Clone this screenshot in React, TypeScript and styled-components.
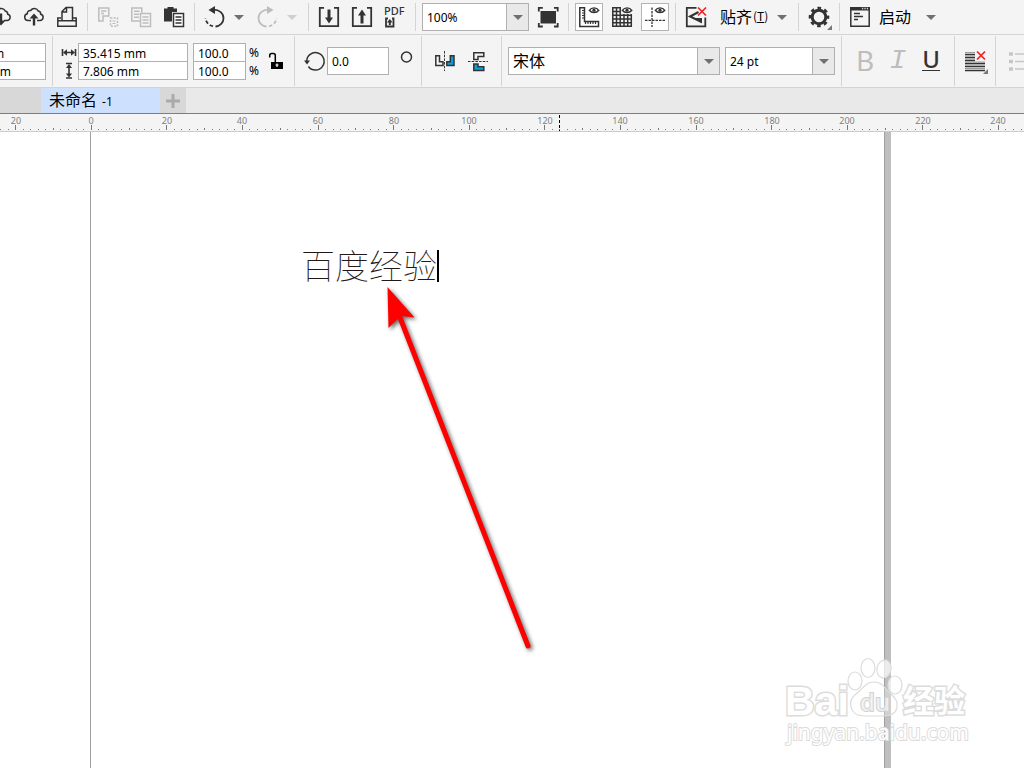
import React, { useEffect, useState } from "react";
import styled, { createGlobalStyle } from "styled-components";

const GlobalStyle = createGlobalStyle`
  *, *::before, *::after { box-sizing: border-box; }
  html, body, #root { height: 100%; }
  body {
    margin: 0;
    overflow: hidden;
    background: #fff;
    color: #000;
    font-family: "Noto Sans", "Noto Sans CJK SC", sans-serif;
    font-size: 12px;
  }
  button, input, select { font: inherit; color: inherit; }
`;

const INK = "#333";
const FAINT = "#bdbdbd";
const BLUE = "#0a9fe0";

/* ---------- layout ---------- */

const Window = styled.div`
  display: flex;
  flex-direction: column;
  height: 100%;
`;

const Toolbar = styled.div<{ $height: number }>`
  display: flex;
  align-items: center;
  flex: none;
  height: ${(p) => p.$height}px;
  overflow: hidden;
  background: #f4f4f4;
  border-bottom: 1px solid #d4d4d4;
`;

const Group = styled.div<{ $tall?: boolean; $roomy?: boolean; $clip?: number; $last?: boolean }>`
  display: flex;
  align-items: center;
  flex: none;
  gap: 5px;
  height: ${(p) => (p.$tall ? 50 : 28)}px;
  padding: 0 ${(p) => (p.$roomy ? 9 : 6)}px;
  border-right: ${(p) => (p.$last ? "none" : "1px solid #d4d4d4")};
  margin-left: ${(p) => -(p.$clip ?? 0)}px;
`;

const Cluster = styled.div`
  display: flex;
  align-items: center;
`;

/* ---------- controls ---------- */

const ToolButton = styled.button<{ $on?: boolean; $width?: number }>`
  display: flex;
  align-items: center;
  justify-content: center;
  flex: none;
  width: ${(p) => p.$width ?? 28}px;
  height: 28px;
  padding: 0;
  border: none;
  background: ${(p) => (p.$on ? "#fff" : "transparent")};
  box-shadow: ${(p) => (p.$on ? "inset 0 0 0 1px #b4b4b4" : "none")};

  svg { display: block; flex: none; }
`;

const LetterButton = styled(ToolButton)<{ $mono?: boolean; $strong?: boolean }>`
  color: ${(p) => (p.$strong ? INK : FAINT)};
  font-family: ${(p) => (p.$mono ? '"Liberation Mono", monospace' : '"Noto Sans", sans-serif')};
  font-style: ${(p) => (p.$mono ? "italic" : "normal")};
  font-size: 28px;
  font-weight: 400;
  line-height: 28px;
  padding-bottom: ${(p) => (p.$mono ? 0 : 2)}px;
`;

const Underlined = styled.span`
  height: 22px;
  line-height: 20px;
  font-size: 24px;
  font-weight: 500;
  border-bottom: 1px solid ${INK};
`;

const MenuButton = styled.button`
  display: flex;
  align-items: center;
  gap: 1px;
  height: 28px;
  padding: 0 0 2px;
  border: none;
  background: transparent;
  font-family: "Noto Sans CJK SC", sans-serif;
  font-size: 16px;
  line-height: 26px;
  white-space: nowrap;
`;

const SnapLabel = styled(MenuButton)`
  width: 57px;
  padding-left: 5px;
`;

const LaunchLabel = styled(MenuButton)`
  width: 42px;
`;

const Mnemonic = styled.span`
  font-size: 12px;
  u { text-underline-offset: 1px; }
`;

const Field = styled.input<{ $width: number; $tall?: boolean }>`
  width: ${(p) => p.$width}px;
  height: ${(p) => (p.$tall ? 28 : 19)}px;
  padding: ${(p) => (p.$tall ? 0 : 2)}px 4px 0;
  border: 1px solid #b0b0b0;
  border-radius: 0;
  background: #fff;
  outline: none;
`;

const Stack = styled.div`
  display: flex;
  flex-direction: column;
  ${Field} + ${Field} { margin-top: -1px; }
`;

const Marks = styled.div<{ $width: number }>`
  display: flex;
  flex-direction: column;
  align-items: center;
  width: ${(p) => p.$width}px;
  padding-top: 2px;
  line-height: 18px;
  svg { display: block; }
`;

const Degree = styled.span`
  display: flex;
  justify-content: center;
  width: 26px;
  padding-left: 8px;
  height: 20px;
`;

const Combo = styled.label<{ $width: number; $large?: boolean }>`
  display: grid;
  flex: none;
  width: ${(p) => p.$width}px;
  height: 28px;
  border: 1px solid #b0b0b0;
  background: #fff;
  font-size: ${(p) => (p.$large ? 16 : 12)}px;

  > * { grid-area: 1 / 1; }
  select {
    width: 100%;
    height: 26px;
    padding: 0 26px 0 4px;
    border: none;
    outline: none;
    appearance: none;
    background: transparent;
  }
`;

const ComboArrow = styled.span`
  display: flex;
  align-items: center;
  justify-content: center;
  justify-self: end;
  width: 22px;
  height: 26px;
  border-left: 1px solid #b0b0b0;
  background: #e9e9e9;
  pointer-events: none;
`;

/* ---------- tabs ---------- */

const TabStrip = styled.div`
  display: flex;
  flex: none;
  height: 26px;
  background: #e9e9e9;
  border-bottom: 1px solid #14a0e4;
`;

const TabHome = styled.button`
  width: 41px;
  border: none;
  background: #d8d8d8;
`;

const Tab = styled.button`
  display: flex;
  align-items: baseline;
  gap: 5px;
  width: 119px;
  padding: 0 8px 2px;
  border: none;
  background: #cde1ff;
  font-family: "Noto Sans CJK SC", sans-serif;
  font-size: 16px;
  line-height: 22px;
  white-space: nowrap;
`;

const TabNumber = styled.span`
  font-family: "Noto Sans", sans-serif;
  font-size: 12px;
`;

const TabAdd = styled.button`
  display: flex;
  align-items: center;
  justify-content: center;
  width: 26px;
  padding: 0;
  border: none;
  background: #d8d8d8;
`;

/* ---------- canvas ---------- */

const RulerBar = styled.div`
  flex: none;
  height: 18px;
  overflow: hidden;
  background: #f4f4f4;
  border-bottom: 1px solid #ccc;
  svg { display: block; }
`;

const Canvas = styled.main`
  position: relative;
  flex: 1;
  overflow: hidden;
  background: #fff;
`;

const Sheet = styled.section`
  width: 795px;
  height: 100%;
  margin-left: 90px;
  border-left: 1px solid #a0a0a0;
  border-right: 1px solid #a0a0a0;
  box-shadow: 6px 0 0 #bfbfbf;
`;

const ArtText = styled.div`
  position: absolute;
  left: 301px;
  top: 118px;
  display: flex;
  height: 32px;
  border-right: 2px solid #000;
  color: #231815;
  font-family: "Noto Sans CJK SC", sans-serif;
  font-size: 34px;
  font-weight: 100;
  line-height: 30px;
  white-space: nowrap;
`;

const Pointer = styled.svg`
  position: absolute;
  left: 380px;
  top: 148px;
  filter: drop-shadow(2px 2px 2px rgba(0, 0, 0, 0.6));
`;

const Watermark = styled.svg`
  position: absolute;
  right: 48px;
  bottom: 16px;
  text { paint-order: stroke; }
`;

/* ---------- icons ---------- */

type IconProps = { children: React.ReactNode; color?: string; w?: number; h?: number };

const Icon = ({ children, color = INK, w = 28, h = 28 }: IconProps) => (
  <svg width={w} height={h} viewBox={`0 0 ${w} ${h}`} fill="none" stroke={color} strokeWidth={1.5} aria-hidden="true">
    {children}
  </svg>
);

const Cloud = ({ up }: { up?: boolean }) => (
  <Icon>
    <path d="M11 17.500H8.200a3.400 3.400 0 0 1-.9-6.700 3 3 0 0 1 3.400-3.300 4.300 4.300 0 0 1 7.600.6 3 3 0 0 1 2.400 3.100 3.200 3.200 0 0 1-.9 6.300H17" />
    {up ? (
      <>
        <path d="M14 22.500V14" strokeWidth={2.4} />
        <path d="M14 10.500l4.500 5h-9z" fill={INK} stroke="none" />
      </>
    ) : (
      <>
        <path d="M14 10.500V19" strokeWidth={2.4} />
        <path d="M14 22.500l4.500-5h-9z" fill={INK} stroke="none" />
      </>
    )}
  </Icon>
);

const Print = () => (
  <Icon>
    <path d="M9 17.500V8.500l4-4h6.500v13M13.500 4.500V9H9" />
    <path d="M8 15H4.800v8.200h18.400V15H20M5 17.800h18" />
  </Icon>
);

const Cut = () => (
  <Icon color={FAINT}>
    <path d="M4.800 5h10v8H9v5H4.800zM7 8h5.500M7 10.500h3" />
    <path d="M16.500 15h7v8.200h-7z" strokeDasharray="2 1.300" />
    <path d="M18.500 18h3M18.500 20.500h3" strokeWidth={1} />
  </Icon>
);

const Copy = () => (
  <Icon color={FAINT}>
    <path d="M13 18H4.800V5h10v4.500M7 8.300h5.500M7 11.300h5M7 14.300h5" />
    <path d="M13.500 10.500h10v13h-10zM15.500 14h6M15.500 17h6M15.500 20h6" />
  </Icon>
);

const Paste = () => (
  <Icon>
    <path d="M4 5.500h3.500V4h6v1.500H17V9h-5v9.500H4z" fill={INK} stroke="none" />
    <path d="M13.500 10.500h10v13h-10z" fill="#fff" />
    <path d="M15.500 14h6M15.500 17h6M15.500 20h6" />
  </Icon>
);

const UndoShape = () => (
  <>
    <path d="M12.500 6.700c6 0 10 3.500 10 8.500 0 4.500-3.500 8-8 8.300" strokeWidth={1.8} />
    <path d="M12 23.200a9 9 0 0 1-7.500-7.700" strokeDasharray="3.500 2" strokeWidth={1.8} />
  </>
);

const Undo = () => (
  <Icon>
    <UndoShape />
    <path d="M7.500 7L14 3v8z" fill={INK} stroke="none" />
  </Icon>
);

const Redo = () => (
  <Icon color={FAINT}>
    <g transform="matrix(-1 0 0 1 27 0)">
      <UndoShape />
      <path d="M7.500 7L14 3v8z" fill={FAINT} stroke="none" />
    </g>
  </Icon>
);

const Import = () => (
  <Icon>
    <path d="M9 4.800H4.800v18.400h18.400V4.800H19" strokeWidth={1.8} />
    <path d="M14 6.500V16" strokeWidth={3} />
    <path d="M14 20.500l4-6h-8z" fill={INK} stroke="none" />
  </Icon>
);

const Export = () => (
  <Icon>
    <path d="M9 4.800H4.800v18.400h18.400V4.800H19" strokeWidth={1.8} />
    <path d="M14 11v9.500" strokeWidth={3} />
    <path d="M14 6.500l4 6h-8z" fill={INK} stroke="none" />
  </Icon>
);

const Pdf = () => (
  <Icon>
    <text x="3" y="12" fontSize="11" fontWeight="500" fontFamily="Noto Sans, sans-serif" fill={INK} stroke="none">PDF</text>
    <path d="M7 15.500H5v8h7.500v-8H11" strokeWidth={1.8} />
    <path d="M8.800 18v4" strokeWidth={2} />
    <path d="M8.800 16l2.900 3.500H5.900z" fill={INK} stroke="none" />
  </Icon>
);

const Preview = () => (
  <Icon>
    <path d="M6.500 8h15.500v12.500H6.500z" fill={INK} stroke="none" />
    <path d="M4.800 8.500V4.800h4M20 4.800h3.700v3.700M23.700 20v3.500H20M8.800 23.500h-4V20" strokeWidth={1.8} />
  </Icon>
);

const Eye = () => (
  <>
    <path d="M14.300 7.300c2.300-3.300 7.200-3.300 9.500 0-2.300 3-7.200 3-9.500 0z" fill="#fff" strokeWidth={1.4} />
    <circle cx="19" cy="7.200" r="1.600" fill={INK} stroke="none" />
  </>
);

const Rulers = () => (
  <Icon>
    <path d="M4.800 4.800h4.700v13.700h14v4.900H4.800z" />
    <path d="M7 7.500h2.500M7 10h2.500M7 12.500h2.500M7 15h2.500M10.500 21v-2.500M13 21v-2.500M15.500 21v-2.500M18 21v-2.500M20.500 21v-2.500" strokeWidth={1.2} />
    <Eye />
  </Icon>
);

const Grid = () => (
  <Icon>
    <path d="M4.800 4v19.500M8.500 4v19.500M12.200 4v19.500M16 11v12.500M19.700 11v12.500M23.300 11v12.500M4 4.800h9M4 8.500h9M4 12.200h20M4 16h20M4 19.700h20M4 23.200h20" />
    <Eye />
  </Icon>
);

const Guides = () => (
  <Icon>
    <path d="M11 4.500v19.500M4 17.300h20" strokeDasharray="2.500 1" strokeWidth={1.3} />
    <Eye />
  </Icon>
);

const SnapOff = () => (
  <Icon>
    <path d="M14.500 4.800H4.800v18.600h18.500v-9" strokeWidth={1.8} />
    <path d="M16.500 9L8 13.500 19.500 19" strokeWidth={2} />
    <path d="M13 15h7v5.500z" fill={INK} stroke="none" />
    <path d="M16 4.500l8 8M24 4.500l-8 8" stroke="#f02020" strokeWidth={1.7} />
  </Icon>
);

const Corner = () => <path d="M27 22v5h-5z" fill="#777" stroke="none" />;

const Gear = () => (
  <Icon>
    <circle cx="14" cy="14" r="6.800" strokeWidth={3} />
    <circle cx="14" cy="14" r="9" strokeWidth={2.6} strokeDasharray="3.600 3.468" strokeDashoffset="1.800" />
    <Corner />
  </Icon>
);

const LaunchIcon = () => (
  <Icon>
    <path d="M4.800 4.800h18.400v18.500H4.800z" />
    <path d="M4 4h20v3.500H4z" fill={INK} stroke="none" />
    <path d="M16 5.500h6" stroke="#ddd" strokeDasharray="1.200 1.200" />
    <path d="M8 10.500h6M8 13.500h9M8 16.500h4" strokeWidth={1.4} />
  </Icon>
);

const Triangle = ({ faint }: { faint?: boolean }) => (
  <svg width="10" height="5" viewBox="0 0 10 5" aria-hidden="true">
    <path d="M0 0h10L5 5z" fill={faint ? "#cfcfcf" : "#707070"} />
  </svg>
);

const WidthMark = () => (
  <Icon w={16} h={18}>
    <path d="M1.500 5v7M14.500 5v7M4 8.500h8" strokeWidth={1.6} />
    <path d="M2 8.500l4-3.200v6.400zM14 8.500l-4-3.200v6.400z" fill={INK} stroke="none" />
  </Icon>
);

const HeightMark = () => (
  <Icon w={16} h={18}>
    <path d="M5 1.500h6M5 16h6M8 5v8" strokeWidth={1.6} />
    <path d="M8 2l3 4H5zM8 15.500l3-4H5z" fill={INK} stroke="none" />
  </Icon>
);

const Lock = () => (
  <Icon w={24} color="#000">
    <path d="M6.700 10.500V8.500q0-2 2-2h1.600q2 0 2 2V15" />
    <path d="M8 15h12v7H8z" fill="#000" stroke="none" />
    <path d="M14 16.500v3.500M12.500 18h3" stroke="#fff" strokeWidth={1.2} />
  </Icon>
);

const Rotate = () => (
  <Icon w={26}>
    <path d="M5.700 14.500a8.700 8.700 0 1 1 1.700 5" />
    <path d="M9 13.500L6 17.500 3 13.500z" fill={INK} stroke="none" />
  </Icon>
);

const MirrorH = () => (
  <Icon>
    <path d="M4.800 8.800h3.700v6H12v3.700H4.800z" />
    <path d="M23 8.800h-3.700v6h-3.500v3.700H23z" fill={BLUE} />
    <path d="M13.500 4v20" strokeDasharray="2.500 1.200" strokeWidth={1} />
  </Icon>
);

const MirrorV = () => (
  <Icon>
    <path d="M9.800 12.500V5.800h10v3.700h-5.800v3z" />
    <path d="M9.800 17v6.500h10v-3.700h-5.800V17z" fill={BLUE} />
    <path d="M4 14.500h20" strokeDasharray="2.500 1.200" strokeWidth={1} />
  </Icon>
);

const AlignNone = () => (
  <Icon>
    <path d="M4 7.500h10M4 10.500h10M4 13.500h10M4 16.500h20M4 19.500h20M4 23.500h20" />
    <path d="M4 5.500h10M4 9h10M4 12h10M4 15h20M4 18h20M4 21.500h20" stroke="#9a9a9a" strokeWidth={1} />
    <path d="M16 4.500l8 8M24 4.500l-8 8" stroke="#f02020" strokeWidth={1.7} />
    <Corner />
  </Icon>
);

const Bullets = () => (
  <Icon color="#c6c6c6">
    <path d="M4 7h4M4 14.500h4M4 22h4" strokeWidth={3.5} />
    <path d="M10 7h16M10 14.500h16M10 22h16" />
  </Icon>
);

/* ---------- ruler ---------- */

const ORIGIN = 91.2;
const PX_PER_MM = 3.78;
const LABEL_ROOM = 12;

const useWindowWidth = () => {
  const [width, setWidth] = useState(window.innerWidth);
  useEffect(() => {
    const update = () => setWidth(window.innerWidth);
    window.addEventListener("resize", update);
    return () => window.removeEventListener("resize", update);
  }, []);
  return width;
};

const Ruler = () => {
  const width = useWindowWidth();
  const marks: { mm: number; x: number }[] = [];
  for (let mm = -24; ORIGIN + mm * PX_PER_MM < width; mm += 2) {
    marks.push({ mm, x: ORIGIN + mm * PX_PER_MM });
  }
  return (
    <RulerBar>
      <svg width="100%" height="17" aria-label="Ruler">
        {marks.map(({ mm, x }) => {
          const size = mm % 20 === 0 ? 5 : mm % 10 === 0 ? 2 : 1;
          return <rect key={mm} x={Math.floor(x)} y={16 - size} width="1" height={size} fill="#777" />;
        })}
        {marks.filter(({ mm, x }) => mm % 20 === 0 && x < width - LABEL_ROOM).map(({ mm, x }) => (
          <text key={mm} x={Math.round(x)} y="10" fontSize="9" textAnchor="middle" fill="#808080">
            {Math.abs(mm)}
          </text>
        ))}
        <path d="M559.500 1v16" stroke="#000" strokeDasharray="3 2" />
      </svg>
    </RulerBar>
  );
};

const BaiduMark = () => (
  <Watermark width="200" height="110" viewBox="0 0 200 110" fill="#fff" stroke="#dcdcdc" strokeWidth={1.2} role="img">
    <g fillOpacity={0.7} transform="translate(0 4)">
      <ellipse cx="79" cy="35" rx="7" ry="9" />
      <ellipse cx="92" cy="22" rx="7" ry="9.500" />
      <ellipse cx="108" cy="23" rx="7" ry="9" transform="rotate(12 108 23)" />
      <ellipse cx="119" cy="39" rx="7" ry="9" />
      <path fillOpacity={0.25} d="M98 36c-9 0-11 7-17 11-5 4-8 8-6 14 2 8 8 9 14 9h18c7 0 13-2 14-9 1-6-2-9-6-13-6-5-8-12-17-12z" />
    </g>
    <text x="9" y="73" fontFamily="Liberation Sans, sans-serif" fontSize="41" fontWeight="700" strokeWidth={3}>Bai</text>
    <text x="84" y="69" fontFamily="Noto Sans, sans-serif" fontSize="24" fontWeight="500" fillOpacity={0.6} stroke="#d2d2d2" strokeWidth={2}>du</text>
    <text x="127" y="70" fontFamily="Noto Sans CJK SC, sans-serif" fontSize="31" fontWeight="700" strokeWidth={3}>经验</text>
    <text x="11" y="98" fontFamily="Noto Sans, sans-serif" fontSize="21" strokeWidth={2}>jingyan.baidu.com</text>
  </Watermark>
);

export default function App() {
  return (
    <Window>
      <GlobalStyle />
      <Toolbar $height={35} role="toolbar" aria-label="Standard">
        <Group $clip={19}>
          <ToolButton aria-label="Download"><Cloud /></ToolButton>
          <ToolButton aria-label="Upload"><Cloud up /></ToolButton>
          <ToolButton aria-label="Print"><Print /></ToolButton>
        </Group>
        <Group>
          <ToolButton aria-label="Cut" disabled><Cut /></ToolButton>
          <ToolButton aria-label="Copy" disabled><Copy /></ToolButton>
          <ToolButton aria-label="Paste"><Paste /></ToolButton>
        </Group>
        <Group>
          <Cluster>
            <ToolButton aria-label="Undo"><Undo /></ToolButton>
            <ToolButton $width={20} aria-label="Undo history"><Triangle /></ToolButton>
          </Cluster>
          <Cluster>
            <ToolButton aria-label="Redo" disabled><Redo /></ToolButton>
            <ToolButton $width={20} aria-label="Redo history" disabled><Triangle faint /></ToolButton>
          </Cluster>
        </Group>
        <Group>
          <ToolButton aria-label="Import"><Import /></ToolButton>
          <ToolButton aria-label="Export"><Export /></ToolButton>
          <ToolButton aria-label="Publish"><Pdf /></ToolButton>
        </Group>
        <Group>
          <Combo $width={107}>
            <select aria-label="Zoom level"><option>100%</option></select>
            <ComboArrow><Triangle /></ComboArrow>
          </Combo>
          <ToolButton aria-label="Full screen preview"><Preview /></ToolButton>
        </Group>
        <Group>
          <ToolButton $on aria-pressed aria-label="Show rulers"><Rulers /></ToolButton>
          <ToolButton aria-label="Show grid"><Grid /></ToolButton>
          <ToolButton $on aria-pressed aria-label="Show guidelines"><Guides /></ToolButton>
        </Group>
        <Group>
          <ToolButton aria-label="Snap off"><SnapOff /></ToolButton>
          <Cluster>
            <SnapLabel>贴齐<Mnemonic>(<u>T</u>)</Mnemonic></SnapLabel>
            <ToolButton $width={20} aria-label="Snap options"><Triangle /></ToolButton>
          </Cluster>
        </Group>
        <Group>
          <ToolButton aria-label="Options"><Gear /></ToolButton>
        </Group>
        <Group $last>
          <ToolButton aria-label="Launcher"><LaunchIcon /></ToolButton>
          <Cluster>
            <LaunchLabel>启动</LaunchLabel>
            <ToolButton $width={20} aria-label="Launch options"><Triangle /></ToolButton>
          </Cluster>
        </Group>
      </Toolbar>

      <Toolbar $height={53} role="toolbar" aria-label="Properties">
        <Group $tall $clip={70}>
          <Stack>
            <Field $width={110} aria-label="X position" defaultValue="48.123 mm" />
            <Field $width={110} aria-label="Y position" defaultValue="261.503 mm" />
          </Stack>
        </Group>
        <Group $tall>
          <Cluster>
            <Marks $width={19}><WidthMark /><HeightMark /></Marks>
            <Stack>
              <Field $width={110} aria-label="Width" defaultValue="35.415 mm" />
              <Field $width={110} aria-label="Height" defaultValue="7.806 mm" />
            </Stack>
          </Cluster>
          <Cluster>
            <Stack>
              <Field $width={53} aria-label="Horizontal scale" defaultValue="100.0" />
              <Field $width={53} aria-label="Vertical scale" defaultValue="100.0" />
            </Stack>
            <Marks $width={16}><span>%</span><span>%</span></Marks>
            <ToolButton $width={26} aria-label="Lock ratio"><Lock /></ToolButton>
          </Cluster>
        </Group>
        <Group $tall>
          <Cluster>
            <Rotate />
            <Field $tall $width={62} aria-label="Rotation" defaultValue="0.0" />
            <Degree>
              <svg width="13" height="13" fill="none" stroke={INK} strokeWidth="1.500" aria-label="degrees">
                <circle cx="6.500" cy="6" r="5" />
              </svg>
            </Degree>
          </Cluster>
        </Group>
        <Group $tall $roomy>
          <ToolButton aria-label="Mirror horizontally"><MirrorH /></ToolButton>
          <ToolButton aria-label="Mirror vertically"><MirrorV /></ToolButton>
        </Group>
        <Group $tall>
          <Combo $width={212} $large>
            <select aria-label="Font"><option>宋体</option></select>
            <ComboArrow><Triangle /></ComboArrow>
          </Combo>
          <Combo $width={110}>
            <select aria-label="Font size"><option>24 pt</option></select>
            <ComboArrow><Triangle /></ComboArrow>
          </Combo>
        </Group>
        <Group $tall $roomy>
          <LetterButton aria-label="Bold" disabled>B</LetterButton>
          <LetterButton $mono aria-label="Italic" disabled>I</LetterButton>
          <LetterButton $strong aria-label="Underline"><Underlined>U</Underlined></LetterButton>
        </Group>
        <Group $tall>
          <ToolButton aria-label="Text alignment"><AlignNone /></ToolButton>
        </Group>
        <Group $tall $roomy $last>
          <ToolButton aria-label="Bulleted list" disabled><Bullets /></ToolButton>
        </Group>
      </Toolbar>

      <TabStrip>
        <TabHome aria-label="Welcome" />
        <Tab>未命名<TabNumber>-1</TabNumber></Tab>
        <TabAdd aria-label="New document">
          <svg width="14" height="14" stroke="#aaa" strokeWidth="3" aria-hidden="true"><path d="M7 0v14M0 7h14" /></svg>
        </TabAdd>
      </TabStrip>

      <Ruler />

      <Canvas>
        <Sheet />
        <ArtText>百度经验</ArtText>
        <Pointer width="170" height="380" viewBox="0 0 170 380" aria-hidden="true">
          <path d="M19 35L148 366" stroke="#f00" strokeWidth="5" strokeLinecap="round" />
          <path d="M7.500 7L34.500 37.500L21 36L8.500 48z" fill="#f00" />
        </Pointer>
        <BaiduMark />
      </Canvas>
    </Window>
  );
}
